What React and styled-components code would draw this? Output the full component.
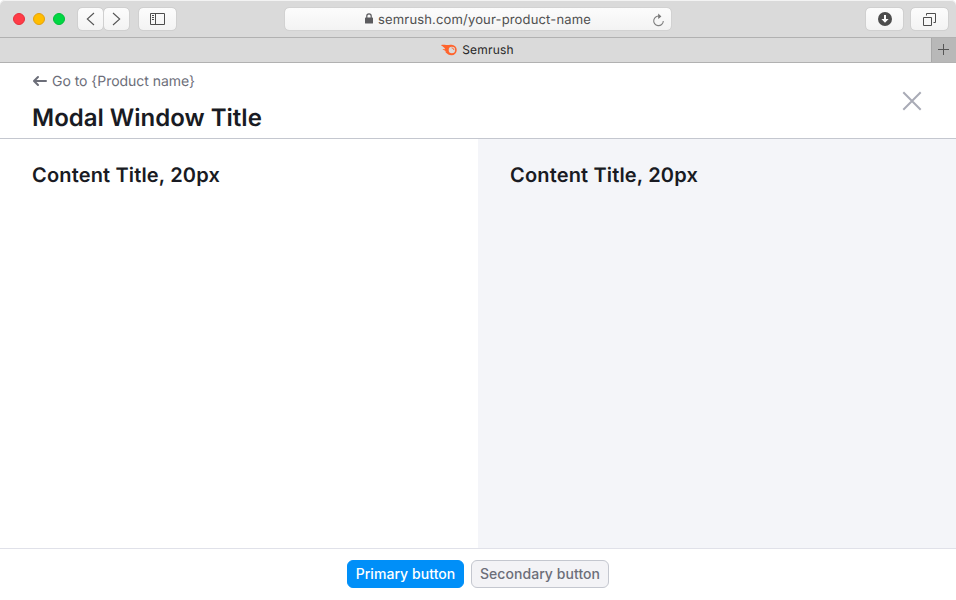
import React from "react";
import styled, { createGlobalStyle } from "styled-components";

const GlobalStyle = createGlobalStyle`
  *, *::before, *::after { box-sizing: border-box; }
  body { margin: 0; background: #fff; }
  button { font: inherit; padding: 0; margin: 0; }
`;

const Window = styled.div`
  display: flex;
  flex-direction: column;
  width: 956px;
  height: 600px;
  overflow: hidden;
  background: #fff;
  font-family: Inter, "Liberation Sans", sans-serif;
  color: #191b23;
  text-rendering: geometricPrecision;
`;

const Toolbar = styled.div`
  display: grid;
  grid-template-columns: 284px 388px 1fr;
  align-items: center;
  flex: none;
  height: 38px;
  background: #dadada;
  border-bottom: 1px solid #b1b1b1;
  border-radius: 5px 5px 0 0;
  box-shadow: inset 0 1px 0 #f3f3f3;
`;

const ToolGroup = styled.div`
  display: flex;
  align-items: center;
  justify-content: ${(p) => (p.$end ? "flex-end" : "flex-start")};
  padding: ${(p) => (p.$end ? "0 7px 0 0" : "0 0 0 13px")};
`;

const Lights = styled.div`
  display: flex;
  gap: 8px;
  margin-right: 12px;
`;

const Light = styled.span`
  width: 12px;
  height: 12px;
  border-radius: 50%;
  background: ${(p) => p.$fill};
  border: 1px solid ${(p) => p.$edge};
`;

const ToolButton = styled.button`
  display: flex;
  align-items: center;
  justify-content: center;
  width: ${(p) => p.$width}px;
  height: 24px;
  margin-left: ${(p) => p.$gap || 0}px;
  margin-top: 1px;
  border: 1px solid #d0d0d0;
  border-radius: 5px;
  background: linear-gradient(#fcfcfc, #f3f3f3);
  background-clip: padding-box;
  color: #4d4d4d;
`;

const AddressBar = styled.div`
  display: flex;
  align-items: center;
  justify-content: center;
  position: relative;
  height: 24px;
  margin-top: 1px;
  border: 1px solid #d2d2d2;
  border-radius: 5px;
  background: linear-gradient(#fcfcfc, #f3f3f3);
  background-clip: padding-box;
  color: #4f4f4f;
  font-size: 13px;
  line-height: 18px;
  letter-spacing: 0.16px;
`;

const Address = styled.span`
  padding-top: 1px;
`;

const LockSlot = styled.span`
  display: flex;
  margin: -2px 5px 0 0;
`;

const ReloadSlot = styled.span`
  position: absolute;
  right: 6px;
  top: 5px;
  display: flex;
`;

const TabStrip = styled.div`
  display: flex;
  flex: none;
  height: 25px;
  background: #dadada;
  border-bottom: 1px solid #b1b1b1;
`;

const Tab = styled.div`
  display: flex;
  flex: 1;
  align-items: center;
  justify-content: center;
  gap: 5px;
  padding-left: 24px;
  font-size: 12px;
  line-height: 16px;
  letter-spacing: 0.2px;
  color: #262626;
`;

const NewTab = styled.button`
  display: flex;
  align-items: center;
  justify-content: center;
  width: 25px;
  padding-right: 1px;
  padding-bottom: 1px;
  border: 0;
  border-left: 1px solid #a8a8a8;
  background: #b8b8b8;
`;

const Header = styled.header`
  display: flex;
  flex: none;
  justify-content: space-between;
  height: 76px;
  padding: 8px 32px 0;
  border-bottom: 1px solid #c4c7cf;
`;

const BackLink = styled.a`
  display: flex;
  align-items: center;
  gap: 4px;
  height: 20px;
  color: #6c6e79;
  font-size: 14px;
  line-height: 20px;
  letter-spacing: -0.04px;
`;

const BackText = styled.span`
  padding-top: 2px;
`;

const Title = styled.h1`
  margin: 13px 0 0;
  font-size: 24px;
  font-weight: 600;
  line-height: 28px;
`;

const CloseButton = styled.button`
  display: flex;
  align-self: flex-start;
  margin-top: 18px;
  border: 0;
  background: none;
`;

const Columns = styled.main`
  display: grid;
  grid-template-columns: 1fr 1fr;
  flex: 1;
`;

const Column = styled.section`
  padding: 24px 32px;
  background: ${(p) => (p.$muted ? "#f4f5f9" : "#fff")};
`;

const ColumnTitle = styled.h2`
  margin: 0;
  font-size: 20px;
  font-weight: 600;
  line-height: 24px;
  letter-spacing: 0.16px;
`;

const Footer = styled.footer`
  display: flex;
  flex: none;
  justify-content: center;
  gap: 7px;
  height: 52px;
  padding-top: 11px;
  border-top: 1px solid #e0e1e9;
`;

const ActionButton = styled.button`
  width: ${(p) => (p.$primary ? 117 : 138)}px;
  height: 28px;
  border: 1px solid ${(p) => (p.$primary ? "#008ff8" : "#c4c7cf")};
  border-radius: 6px;
  background: ${(p) => (p.$primary ? "#008ff8" : "#f3f3f6")};
  color: ${(p) => (p.$primary ? "#fff" : "#6c6e79")};
  font-size: 14px;
  font-weight: 500;
  line-height: 20px;
  letter-spacing: 0.06px;
  white-space: nowrap;
`;

const Chevron = ({ d }) => (
  <svg width="9" height="14" viewBox="0 0 9 14" fill="none" stroke="#555" strokeWidth="1.1">
    <path d={d} />
  </svg>
);

const SidebarIcon = () => (
  <svg width="15" height="12" viewBox="0 0 15 12" fill="none" stroke="#4d4d4d">
    <path d="M.5.5h14v11H.5zM5.5.5v11M2 2.5h2M2 4.5h2M2 6.5h2" />
  </svg>
);

const LockIcon = () => (
  <svg width="8" height="11" viewBox="0 0 8 11">
    <rect y="4.6" width="8" height="6" rx=".7" fill="#5b5b5e" />
    <path d="M1.8 5V3.1a2.2 2.2 0 0 1 4.4 0V5" fill="none" stroke="#5b5b5e" strokeWidth="1.2" />
  </svg>
);

const ReloadIcon = () => (
  <svg width="13" height="14" viewBox="0 0 13 14">
    <path d="M8 3.3A4.8 4.8 0 1 0 11.3 8" fill="none" stroke="#808080" strokeWidth="1.1" />
    <path d="M6.2.5 9.4 3.4 6.2 6z" fill="#777" />
  </svg>
);

const DownloadIcon = () => (
  <svg width="14" height="14" viewBox="0 0 14 14">
    <circle cx="7" cy="7" r="7" fill="#4d4d4d" />
    <path d="M6 3h2v4h2.6L7 10.8 3.4 7H6z" fill="#fff" />
  </svg>
);

const TabsIcon = () => (
  <svg width="13" height="13" viewBox="0 0 13 13" fill="none" stroke="#4d4d4d">
    <path d="M.5 4.5h8v8h-8zM3.5 2.5v-2h9v9h-2" />
  </svg>
);

const SemrushIcon = () => (
  <svg width="16" height="12" viewBox="0 0 16 12">
    <path
      fill="#ff642d"
      d="M.3.9C2.8.7 6 1.1 8.1 1.1 9 .8 9.7.7 10.5.7a5.2 5.2 0 0 1 0 10.5c-2.6 0-4.1-1.2-5.7-2.7-.7-.6-.9-1-.1-.9l.8.1C4.2 6.7 3.3 6.2 1.9 5.5c-.5-.3-.3-.6.2-.5l2.1.2C3.5 3.8 2 2.7.3 1.6 0 1.3 0 .9.3.9Z"
    />
    <circle cx="10.9" cy="6" r="3.2" fill="#dadada" />
    <path d="M11 3.9a2 2 0 0 1 1.9 1.8" fill="none" stroke="#ff642d" strokeWidth=".9" strokeLinecap="round" />
  </svg>
);

const PlusIcon = () => (
  <svg width="11" height="11" viewBox="0 0 11 11" stroke="#555">
    <path d="M5.5 0v11M0 5.5h11" />
  </svg>
);

const ArrowIcon = () => (
  <svg width="16" height="16" viewBox="0 0 16 16" fill="none" stroke="#6c6e79" strokeWidth="2" strokeLinecap="round" strokeLinejoin="round">
    <path d="M6 4 2 8l4 4M2.5 8H14" />
  </svg>
);

const CloseIcon = () => (
  <svg width="24" height="24" viewBox="0 0 24 24" stroke="#a9abb6" strokeWidth="2">
    <path d="m3.3 3.3 17.4 17.4m0-17.4L3.3 20.7" />
  </svg>
);

const LIGHTS = [
  ["#ff3b47", "#e5303c"],
  ["#ffbd00", "#e2a010"],
  ["#00d742", "#00bd39"],
];

export default function App() {
  return (
    <>
      <GlobalStyle />
      <Window>
        <Toolbar>
          <ToolGroup>
            <Lights>
              {LIGHTS.map(([fill, edge]) => (
                <Light key={fill} $fill={fill} $edge={edge} />
              ))}
            </Lights>
            <ToolButton $width={27} aria-label="Back"><Chevron d="M8 1 1.3 7 8 13" /></ToolButton>
            <ToolButton $width={27} $gap={-1} aria-label="Forward"><Chevron d="m1 1 6.7 6L1 13" /></ToolButton>
            <ToolButton $width={39} $gap={8} aria-label="Sidebar"><SidebarIcon /></ToolButton>
          </ToolGroup>
          <AddressBar>
            <LockSlot><LockIcon /></LockSlot>
            <Address>semrush.com/your-product-name</Address>
            <ReloadSlot><ReloadIcon /></ReloadSlot>
          </AddressBar>
          <ToolGroup $end>
            <ToolButton $width={39} aria-label="Downloads"><DownloadIcon /></ToolButton>
            <ToolButton $width={39} $gap={6} aria-label="Show tabs"><TabsIcon /></ToolButton>
          </ToolGroup>
        </Toolbar>
        <TabStrip>
          <Tab><SemrushIcon />Semrush</Tab>
          <NewTab aria-label="New tab"><PlusIcon /></NewTab>
        </TabStrip>
        <Header>
          <div>
            <BackLink><ArrowIcon /><BackText>Go to {"{Product name}"}</BackText></BackLink>
            <Title>Modal Window Title</Title>
          </div>
          <CloseButton aria-label="Close"><CloseIcon /></CloseButton>
        </Header>
        <Columns>
          <Column><ColumnTitle>Content Title, 20px</ColumnTitle></Column>
          <Column $muted><ColumnTitle>Content Title, 20px</ColumnTitle></Column>
        </Columns>
        <Footer>
          <ActionButton $primary>Primary button</ActionButton>
          <ActionButton>Secondary button</ActionButton>
        </Footer>
      </Window>
    </>
  );
}
